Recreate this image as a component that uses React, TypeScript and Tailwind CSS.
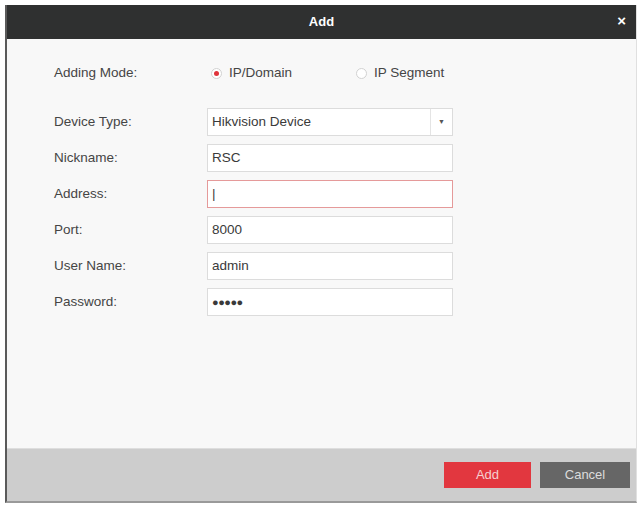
import React, { useState } from "react";

const font = { fontFamily: '"Liberation Sans", Arial, sans-serif' };

const Row = ({ label, children }: { label: string; children: React.ReactNode }) => (
  <div className="flex items-center h-[28px]">
    <div className="w-[153px] text-[13.5px] text-[#454545]">{label}</div>
    {children}
  </div>
);

const Field = ({ value, error, dots }: { value: string; error?: boolean; dots?: boolean }) => (
  <div
    className={`w-[246px] h-[28px] flex items-center px-[4px] bg-white border text-[#3a3a3a] ${
      dots ? "text-[11px] font-bold tracking-[-0.5px]" : "text-[13.5px]"
    } ${error ? "border-[#e59a9a]" : "border-[#dcdcdc]"}`}
  >
    {value}
  </div>
);

const Radio = ({ checked, label, onClick }: { checked: boolean; label: string; onClick: () => void }) => (
  <button className="flex items-center gap-[7px] text-[13.5px] text-[#454545]" onClick={onClick}>
    <span className="w-[11px] h-[11px] rounded-full border border-[#d2d2d2] bg-white flex items-center justify-center">
      {checked && <span className="w-[5px] h-[5px] rounded-full bg-[#e0343c]" />}
    </span>
    {label}
  </button>
);

export default function App() {
  const [mode, setMode] = useState("ip");

  return (
    <div className="w-[643px] h-[509px] bg-white pt-[5px] pl-[5px]" style={font}>
      <div className="w-[632px] h-[498px] flex flex-col border-l-2 border-[#5a5a5a] border-r border-r-[#e0e0e0] border-b-2 border-b-[#9a9a9a]">
        <div className="h-[34px] bg-[#2f3030] flex items-center justify-center relative">
          <span className="text-white font-bold text-[13px]">Add</span>
          <span className="absolute right-[10px] top-[8px] text-white font-bold text-[15px] leading-none">×</span>
        </div>
        <div className="flex-1 bg-[#f8f8f8] pl-[47px] pt-[20px]">
          <Row label="Adding Mode:">
            <div className="flex items-center pl-[4px]">
              <div className="w-[145px]">
                <Radio checked={mode === "ip"} label="IP/Domain" onClick={() => setMode("ip")} />
              </div>
              <Radio checked={mode === "seg"} label="IP Segment" onClick={() => setMode("seg")} />
            </div>
          </Row>
          <div className="mt-[21px] flex flex-col gap-[8px]">
            <Row label="Device Type:">
              <div className="w-[246px] h-[28px] flex bg-white border border-[#dcdcdc] text-[13.5px] text-[#3a3a3a]">
                <div className="flex-1 flex items-center px-[4px]">Hikvision Device</div>
                <div className="w-[22px] border-l border-[#e4e4e4] flex items-center justify-center text-[7px] text-[#555]">▼</div>
              </div>
            </Row>
            <Row label="Nickname:">
              <Field value="RSC" />
            </Row>
            <Row label="Address:">
              <Field value="|" error />
            </Row>
            <Row label="Port:">
              <Field value="8000" />
            </Row>
            <Row label="User Name:">
              <Field value="admin" />
            </Row>
            <Row label="Password:">
              <Field value="●●●●●" dots />
            </Row>
          </div>
        </div>
        <div className="h-[53px] bg-[#cdcdcd] border-t border-[#dedede] flex items-center justify-end gap-[9px] pr-[6px]">
          <button className="w-[87px] h-[26px] bg-[#e2373f] text-[#f6d0d0] text-[13px]">Add</button>
          <button className="w-[90px] h-[26px] bg-[#666666] text-[#dcdcdc] text-[13px]">Cancel</button>
        </div>
      </div>
    </div>
  );
}
